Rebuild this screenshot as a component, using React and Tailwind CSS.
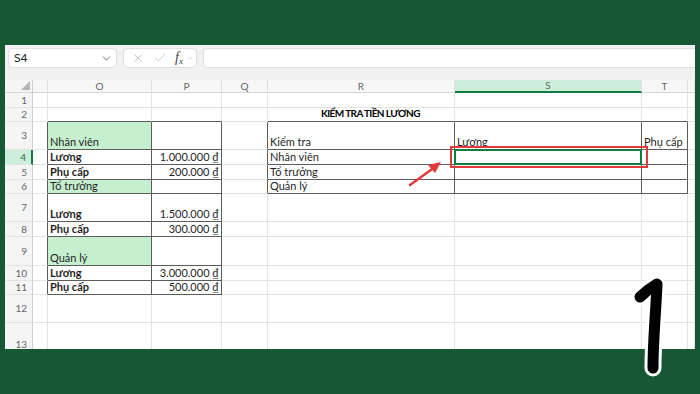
import { X, Check, ChevronDown } from 'lucide-react';

const COLS = ['', '', 'O', 'P', 'Q', 'R', 'S', 'T', ''];
const ROWS = [1, 2, 3, 4, 5, 6, 7, 8, 9, 10, 11, 12, 13];

// cell contents keyed by "row-col"
const CELLS = {
  '2-5': { text: 'KIỂM TRA TIỀN LƯƠNG', title: true },
  '3-2': { text: 'Nhân viên', green: true },
  '3-5': { text: 'Kiểm tra' },
  '3-6': { text: 'Lương' },
  '3-7': { text: 'Phụ cấp' },
  '4-2': { text: 'Lương', bold: true },
  '4-3': { text: '1.000.000 ₫', right: true },
  '4-5': { text: 'Nhân viên' },
  '4-6': { selected: true },
  '5-2': { text: 'Phụ cấp', bold: true },
  '5-3': { text: '200.000 ₫', right: true },
  '5-5': { text: 'Tổ trưởng' },
  '6-2': { text: 'Tổ trưởng', green: true },
  '6-5': { text: 'Quản lý' },
  '7-2': { text: 'Lương', bold: true },
  '7-3': { text: '1.500.000 ₫', right: true },
  '8-2': { text: 'Phụ cấp', bold: true },
  '8-3': { text: '300.000 ₫', right: true },
  '9-2': { text: 'Quản lý', green: true },
  '10-2': { text: 'Lương', bold: true },
  '10-3': { text: '3.000.000 ₫', right: true },
  '11-2': { text: 'Phụ cấp', bold: true },
  '11-3': { text: '500.000 ₫', right: true },
};

const inTable = (r, c) =>
  (r >= 3 && r <= 11 && c >= 2 && c <= 3) || (r >= 3 && r <= 6 && c >= 5 && c <= 7);

function Cell({ r, c }) {
  const cell = CELLS[`${r}-${c}`] || {};
  const darkR = inTable(r, c) || inTable(r, c + 1);
  const darkB = inTable(r, c) || inTable(r + 1, c);
  return (
    <div
      className={`relative flex items-end overflow-visible whitespace-nowrap border-r border-b px-[2px] pb-[1px] text-[11px] leading-[13px] text-[#1f1f1f] ${
        darkR ? 'border-r-[#5c5c5c]' : 'border-r-[#e3e3e3]'
      } ${darkB ? 'border-b-[#5c5c5c]' : 'border-b-[#e3e3e3]'} ${
        cell.green ? 'bg-[#c6efd0]' : 'bg-white'
      } ${cell.right ? 'justify-end' : ''} ${cell.bold ? 'font-bold' : ''}`}
    >
      {cell.title && (
        <span className="pl-[51px] text-[10px] font-bold tracking-[-0.6px] text-black">{cell.text}</span>
      )}
      {!cell.title && cell.text}
      {cell.selected && (
        <div className="absolute inset-[-1px] border-2 border-[#107c41]" />
      )}
    </div>
  );
}

function FormulaBar() {
  return (
    <div className="flex h-[35px] shrink-0 items-start gap-[6px] bg-[#f1f1f1] pt-[3px] pl-[3px]">
      <div className="flex h-[20px] w-[109px] items-center justify-between rounded-[4px] border border-[#e0e0e0] bg-white pl-[5px] pr-[3px] text-[12px] text-[#222]">
        <span>S4</span>
        <ChevronDown size={13} strokeWidth={1.5} className="text-[#555]" />
      </div>
      <div className="flex h-[20px] w-[74px] items-center gap-[8px] rounded-[4px] border border-[#e0e0e0] bg-white pl-[7px] text-[#b5b5b5]">
        <X size={14} strokeWidth={1.2} />
        <Check size={14} strokeWidth={1.2} />
        <span className="font-['Liberation_Serif',serif] text-[14px] leading-[14px] italic text-[#444]">
          f<sub className="text-[9px]">x</sub>
        </span>
        <ChevronDown size={8} strokeWidth={1.5} className="-ml-[5px]" />
      </div>
      <div className="h-[20px] flex-1 rounded-l-[4px] border border-r-0 border-[#e0e0e0] bg-white" />
    </div>
  );
}

export default function App() {
  return (
    <div className="relative h-[394px] w-[700px] overflow-hidden bg-[#175834] font-['Lato','Liberation_Sans',sans-serif]">
      <div className="ml-[5px] mt-[45px] flex h-[304px] w-[690px] flex-col overflow-hidden bg-white">
        <FormulaBar />
        <div className="grid shrink-0 grid-cols-[28px_15px_104px_70px_46px_187px_187px_46px_7px] grid-rows-[13px_15px_14px_28px_15px_15px_14px_28px_15px_29px_15px_14px_28px_44px]">
          {COLS.map((h, c) =>
            c === 0 ? (
              <div key={`h${c}`} className="relative border-r border-b border-r-[#cfcfcf] border-b-[#d6d6d6] bg-[#f5f5f5]">
                <svg className="absolute bottom-[2px] right-[2px]" width="9" height="9" viewBox="0 0 9 9">
                  <path d="M9 0 L9 9 L0 9 Z" fill="#b4b4b4" />
                </svg>
              </div>
            ) : (
              <div
                key={`h${c}`}
                className={`flex items-center justify-center border-r border-r-[#e0e0e0] text-[10px] text-[#666] ${
                  c === 6 ? 'border-b-2 border-b-[#107c41] bg-[#cdeedb] text-[#2c6b47]' : 'border-b border-b-[#d6d6d6] bg-[#f7f7f7]'
                }`}
              >
                {h}
              </div>
            )
          )}
          {ROWS.map((r) => [
            <div
              key={`r${r}`}
              className={`flex items-center justify-end border-r border-b border-b-[#e3e3e3] pr-[5px] text-[10px] ${
                r === 4 ? 'border-r-2 border-r-[#107c41] bg-[#cdeedb] text-[#2c6b47]' : 'border-r-[#cfcfcf] bg-[#f5f5f5] text-[#666]'
              }`}
            >
              {r}
            </div>,
            ...COLS.slice(1).map((_, i) => <Cell key={`${r}-${i + 1}`} r={r} c={i + 1} />),
          ])}
        </div>
      </div>

      {/* red highlight box around S4 */}
      <div className="absolute left-[450px] top-[146px] h-[22px] w-[198px] border-2 border-[#e2393b]" />

      {/* arrow + handwritten number */}
      <svg className="absolute left-0 top-0" width="700" height="394" viewBox="0 0 700 394">
        <line x1="410" y1="185" x2="435" y2="167" stroke="#e2393b" strokeWidth="2.5" strokeLinecap="round" />
        <path d="M441 162 L428 165 L435 173 Z" fill="#e2393b" />
        <path
          d="M640 297 C645 292 652 287 657 284 C656 310 653 340 653 368"
          fill="none"
          stroke="#ffffff"
          strokeWidth="17"
          strokeLinecap="round"
          strokeLinejoin="round"
        />
        <path
          d="M640 297 C645 292 652 287 657 284 C656 310 653 340 653 368"
          fill="none"
          stroke="#000000"
          strokeWidth="11"
          strokeLinecap="round"
          strokeLinejoin="round"
        />
      </svg>
    </div>
  );
}
